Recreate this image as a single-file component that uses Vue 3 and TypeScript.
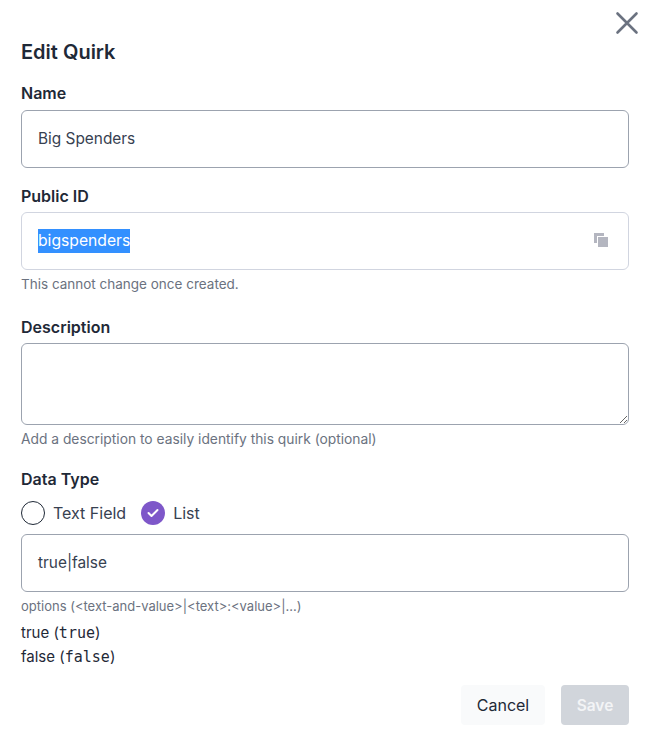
<template>
  <div class="dialog">
    <button class="close-btn" type="button" aria-label="Close">
      <svg width="24" height="24" viewBox="0 0 24 24" fill="none">
        <path d="M2.5 2.5L21.5 21.5M21.5 2.5L2.5 21.5" stroke="#6b7280" stroke-width="2.6" stroke-linecap="round" />
      </svg>
    </button>

    <h2 class="title">Edit Quirk</h2>

    <div class="field name-field">
      <label class="label">Name</label>
      <div class="input">Big Spenders</div>
    </div>

    <div class="field id-field">
      <label class="label">Public ID</label>
      <div class="input input-disabled">
        <span class="selected">bigspenders</span>
        <svg class="copy-icon" width="16" height="16" viewBox="0 0 16 16">
          <path d="M1 1H11V4H4V11H1Z" fill="#b4b6c0" />
          <rect x="5" y="5" width="10" height="10" fill="#b4b6c0" />
        </svg>
      </div>
      <p class="hint">This cannot change once created.</p>
    </div>

    <div class="field desc-field">
      <label class="label">Description</label>
      <textarea class="textarea"></textarea>
      <p class="hint hint-desc">Add a description to easily identify this quirk (optional)</p>
    </div>

    <div class="field type-field">
      <label class="label">Data Type</label>
      <div class="radios">
        <div v-for="opt in types" :key="opt" class="radio-item">
          <span class="radio" :class="{ checked: opt === current }">
            <svg v-if="opt === current" width="12" height="10" viewBox="0 0 12 10" fill="none">
              <path d="M1.5 5L4.5 8L10.5 2" stroke="#fff" stroke-width="2" stroke-linecap="round" stroke-linejoin="round" />
            </svg>
          </span>
          <span>{{ opt }}</span>
        </div>
      </div>
      <div class="input">true|false</div>
      <p class="hint options">options (&lt;text-and-value&gt;|&lt;text&gt;:&lt;value&gt;|...)</p>
      <ul class="preview">
        <li v-for="item in preview" :key="item">{{ item }} (<code>{{ item }}</code>)</li>
      </ul>
    </div>

    <div class="actions">
      <button class="btn btn-cancel" type="button">Cancel</button>
      <button class="btn btn-save" type="button" disabled>Save</button>
    </div>
  </div>
</template>

<script setup lang="ts">
const types: string[] = ['Text Field', 'List']
const current = 'List'
const preview: string[] = ['true', 'false']
</script>

<style>
html,
body {
  margin: 0;
  background: #fff;
}
</style>

<style scoped>
.dialog {
  position: relative;
  box-sizing: border-box;
  width: 656px;
  height: 754px;
  padding: 40px 27px 0 21px;
  font-family: Inter, "Liberation Sans", sans-serif;
  color: #1f2937;
}

.close-btn {
  position: absolute;
  top: 11px;
  right: 17px;
  padding: 0;
  border: 0;
  background: none;
  line-height: 0;
}

.title {
  margin: 0;
  font-size: 20px;
  line-height: 24px;
  font-weight: 600;
  color: #1f2937;
}

.field {
  display: flex;
  flex-direction: column;
}

.name-field {
  margin-top: 19px;
}

.id-field {
  margin-top: 18px;
}

.desc-field {
  margin-top: 25px;
}

.type-field {
  margin-top: 22px;
}

.label {
  font-size: 16px;
  line-height: 20px;
  font-weight: 600;
  color: #1f2937;
  margin-bottom: 7px;
}

.id-field .label,
.desc-field .label {
  margin-bottom: 6px;
}

.input {
  box-sizing: border-box;
  display: flex;
  align-items: center;
  justify-content: space-between;
  height: 58px;
  padding: 0 16px 2px;
  border: 1px solid #9ca3af;
  border-radius: 6px;
  font-size: 15.4px;
  color: #374151;
}

.input-disabled {
  border-color: #d1d5e0;
  padding-bottom: 0;
  font-size: 15.7px;
}

.selected {
  background: #3390ff;
  color: #fff;
  line-height: 24px;
}

.copy-icon {
  margin: 0 3px 3px 0;
}

.textarea {
  box-sizing: border-box;
  display: block;
  width: 100%;
  height: 82px;
  padding: 12px 16px;
  border: 1px solid #9ca3af;
  border-radius: 6px;
  font: inherit;
  background: #fff;
  outline: none;
}

.hint {
  margin: 6px 0 0;
  font-size: 13.5px;
  line-height: 16px;
  color: #6b7280;
}

.hint-desc {
  font-size: 13.8px;
}

.radios {
  display: flex;
  gap: 15px;
  margin-top: -6px;
  margin-bottom: 9px;
  padding-top: 11px;
  font-size: 16px;
  color: #374151;
}

.radio-item {
  display: flex;
  align-items: center;
  gap: 8px;
}

.radio {
  box-sizing: border-box;
  display: flex;
  align-items: center;
  justify-content: center;
  width: 24px;
  height: 24px;
  border: 1px solid #1f2937;
  border-radius: 50%;
}

.radio.checked {
  border: 0;
  background: #7e57c9;
}

.options {
  margin-top: 6px;
  font-size: 13px;
}

.preview {
  list-style: none;
  margin: 7px 0 0;
  padding: 0;
  font-size: 15px;
  line-height: 23px;
  color: #1f2937;
}

.preview code {
  font-family: "DejaVu Sans Mono", monospace;
  font-size: 15px;
}

.actions {
  display: flex;
  justify-content: flex-end;
  gap: 16px;
  margin-top: 16px;
}

.btn {
  height: 40px;
  border: 0;
  border-radius: 4px;
  font-family: inherit;
  font-size: 16px;
}

.btn-cancel {
  width: 84px;
  background: #f9fafb;
  color: #1f2937;
}

.btn-save {
  width: 68px;
  background: #d1d5db;
  color: #f3f4f6;
  font-size: 15.5px;
  font-weight: 600;
}
</style>
